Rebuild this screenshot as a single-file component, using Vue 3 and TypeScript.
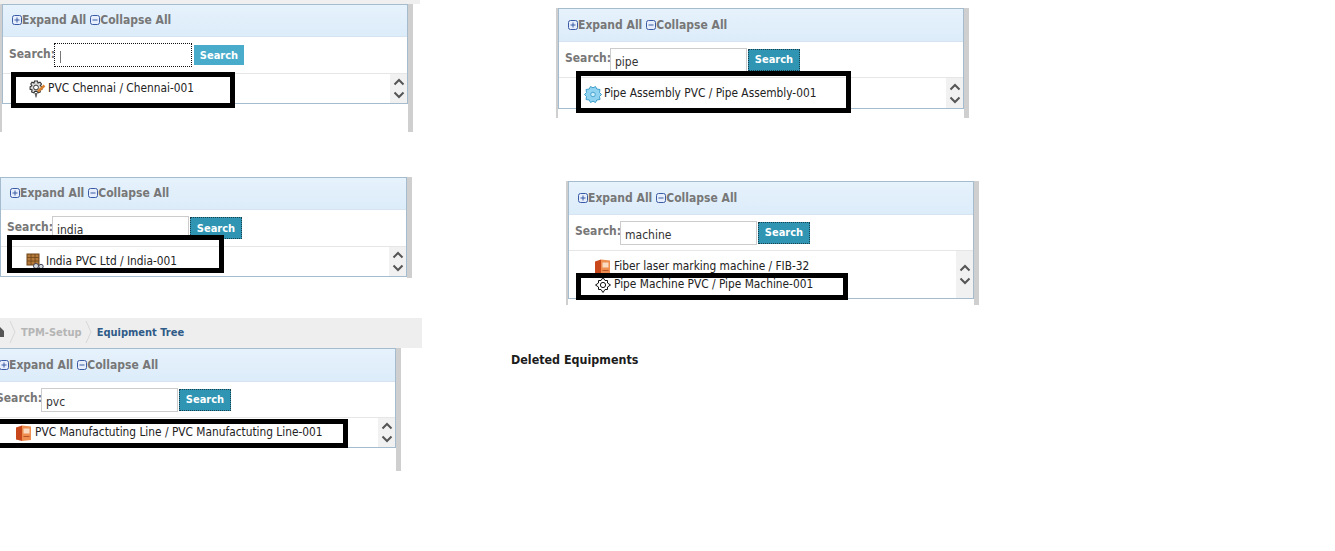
<script setup lang="ts">
type Icon = 'tool' | 'gear' | 'boxes' | 'cabinet' | 'target'
interface Row { icon: Icon; label: string }
interface Panel {
  x: number; y: number; w: number; frameH: number
  headH: number; searchH: number; listH: number; top: number
  query: string; focused: boolean; rows: Row[]
}
const panels: Panel[] = [
  { x: 2, y: 4, w: 406, frameH: 128, headH: 32, searchH: 37, listH: 29, top: 5, query: '', focused: true,
    rows: [{ icon: 'tool', label: 'PVC Chennai / Chennai-001' }] },
  { x: 558, y: 8, w: 406, frameH: 110, headH: 33, searchH: 36, listH: 30, top: 6, query: 'pipe', focused: false,
    rows: [{ icon: 'gear', label: 'Pipe Assembly PVC / Pipe Assembly-001' }] },
  { x: 0, y: 177, w: 407, frameH: 101, headH: 32, searchH: 37, listH: 29, top: 5, query: 'india', focused: false,
    rows: [{ icon: 'boxes', label: 'India PVC Ltd / India-001' }] },
  { x: 568, y: 181, w: 406, frameH: 124, headH: 33, searchH: 36, listH: 47, top: 6, query: 'machine', focused: false,
    rows: [
      { icon: 'cabinet', label: 'Fiber laser marking machine / FIB-32' },
      { icon: 'target', label: 'Pipe Machine PVC / Pipe Machine-001' },
    ] },
  { x: -11, y: 348, w: 407, frameH: 123, headH: 33, searchH: 36, listH: 29, top: 5, query: 'pvc', focused: false,
    rows: [{ icon: 'cabinet', label: 'PVC Manufactuting Line / PVC Manufactuting Line-001' }] },
]
const boxes = [
  { x: 11, y: 72, w: 224, h: 36 },
  { x: 576, y: 71, w: 275, h: 42 },
  { x: 7, y: 235, w: 217, h: 38 },
  { x: 576, y: 273, w: 272, h: 27 },
  { x: -5, y: 419, w: 353, h: 29 },
]
function place(o: { x: number; y: number; w: number; h?: number }, h?: number) {
  return { left: o.x + 'px', top: o.y + 'px', width: o.w + 'px', height: (h ?? o.h) + 'px' }
}
</script>

<template>
  <div class="canvas">
    <div class="topstrip"></div>

    <nav class="crumbs">
      <svg class="home" width="6" height="12" viewBox="0 0 6 12"><path d="M-4 6 L0 1 L4 5 V11 H-4 Z" fill="#555" /></svg>
      <svg class="sep" width="8" height="24" viewBox="0 0 8 24"><path d="M1 1 L6 12 L1 23" fill="none" stroke="#d8d8d8" /></svg>
      <span class="crumb-muted">TPM-Setup</span>
      <svg class="sep" width="8" height="24" viewBox="0 0 8 24"><path d="M1 1 L6 12 L1 23" fill="none" stroke="#d8d8d8" /></svg>
      <span class="crumb-active">Equipment Tree</span>
    </nav>

    <section v-for="p in panels" :key="p.x" class="frame" :style="place(p, p.frameH)">
      <div class="panel">
        <header class="head" :style="{ height: p.headH + 'px' }">
          <a class="tool">
            <svg width="10" height="10" viewBox="0 0 10 10"><rect x=".5" y=".5" width="9" height="9" rx="2" fill="#e6eefb" stroke="#3b5aa5" /><path d="M2.500 5h5M5 2.500v5" stroke="#3b5aa5" /></svg>Expand All
          </a>
          <a class="tool">
            <svg width="10" height="10" viewBox="0 0 10 10"><rect x=".5" y=".5" width="9" height="9" rx="2" fill="#e6eefb" stroke="#3b5aa5" /><path d="M2.500 5h5" stroke="#3b5aa5" /></svg>Collapse All
          </a>
        </header>
        <div class="search" :style="{ height: p.searchH + 'px' }">
          <label class="search-label">Search:</label>
          <div class="field" :class="{ focused: p.focused }">
            <i v-if="p.focused" class="caret"></i>{{ p.query }}
          </div>
          <button class="go" :class="{ light: p.focused }">Search</button>
        </div>
        <div class="list" :style="{ height: p.listH + 'px' }">
          <ul class="rows" :style="{ paddingTop: p.top + 'px' }">
            <li v-for="r in p.rows" :key="r.label" class="row">
              <svg class="ico" width="18" height="18" viewBox="0 0 18 18">
                <template v-if="r.icon === 'tool'">
                  <path d="M6.500 1h3l.5 2 2-.8 1.500 1.800-1.200 1.700 1.700 1v2.600l-2 .6.300 2-2.200 1-1.200-1.500h-2l-1 1.500-2.300-1 .5-2-2-.6V6.700l1.800-1-1.100-1.700L4 2.200l2 .8z" fill="#d9d9d9" stroke="#333" stroke-width="1.100" />
                  <circle cx="8" cy="7.500" r="2.400" fill="#fff" stroke="#333" />
                  <path d="M6.500 13h3l-1 4.500h-1z" fill="#666" />
                  <path d="M10 11.500 L16.500 5.500" stroke="#d9822b" stroke-width="2.400" />
                </template>
                <template v-else-if="r.icon === 'gear'">
                  <path d="M6.500 1.500 L9 2.800 L11.500 1.500 L12.800 4 L16 4.500 L15.500 7.500 L17.500 9.500 L15.500 11.500 L16 14.500 L12.800 15 L11.500 17.500 L9 16.200 L6.500 17.500 L5.200 15 L2 14.500 L2.500 11.500 L.5 9.500 L2.500 7.500 L2 4.500 L5.200 4 Z" fill="#8fd3f0" stroke="#3f9fcb" />
                  <circle cx="9" cy="9.500" r="2.300" fill="#c9ecfa" stroke="#4aa5cf" />
                </template>
                <template v-else-if="r.icon === 'boxes'">
                  <rect x="1" y="1" width="12" height="11" fill="#b5793a" stroke="#6d4519" />
                  <path d="M1 4.500h12M1 8h12M5 1v11M9 1v11" stroke="#6d4519" stroke-width=".8" />
                  <circle cx="10" cy="13" r="2.500" fill="#d6dde0" stroke="#445" />
                  <circle cx="15" cy="13.500" r="2.200" fill="#d6dde0" stroke="#445" />
                </template>
                <template v-else-if="r.icon === 'cabinet'">
                  <path d="M1 3.500 L7 1.500 V17 L1 15.500 Z" fill="#c8481c" />
                  <path d="M7 1.500 L16 2.500 V16 L7 17 Z" fill="#ee8e4f" />
                  <path d="M8.500 4.500h6v5h-6z" fill="#f9dcc2" />
                  <path d="M8.500 12.500h6" stroke="#b9552a" />
                </template>
                <template v-else>
                  <path d="M9 1.500 L11 4.500 H13.500 V7 L16.500 9 L13.500 11 V13.500 H11 L9 16.500 L7 13.500 H4.500 V11 L1.500 9 L4.500 7 V4.500 H7 Z" fill="#fff" stroke="#111" />
                  <circle cx="9" cy="9" r="2.600" fill="#fff" stroke="#111" />
                </template>
              </svg>
              <span class="row-text">{{ r.label }}</span>
            </li>
          </ul>
          <div class="scroll">
            <svg width="12" height="8" viewBox="0 0 12 8"><path d="M1.500 6.500 L6 2 L10.500 6.500" fill="none" stroke="#555" stroke-width="2" /></svg>
            <svg width="12" height="8" viewBox="0 0 12 8"><path d="M1.500 1.500 L6 6 L10.500 1.500" fill="none" stroke="#555" stroke-width="2" /></svg>
          </div>
        </div>
      </div>
    </section>

    <div v-for="b in boxes" :key="b.y" class="mark" :style="place(b)"></div>

    <h2 class="deleted">Deleted Equipments</h2>
  </div>
</template>

<style scoped>
.canvas {
  position: relative;
  width: 1335px;
  height: 551px;
  overflow: hidden;
  background: #fff;
  font-family: "DejaVu Sans", "Liberation Sans", sans-serif;
  font-stretch: condensed;
}
.topstrip {
  position: absolute;
  left: 0;
  top: 0;
  width: 420px;
  height: 4px;
  background: #efefef;
}
.crumbs {
  position: absolute;
  left: 0;
  top: 318px;
  width: 422px;
  height: 30px;
  padding-bottom: 2px;
  box-sizing: border-box;
  background: #eeeeee;
  display: flex;
  align-items: center;
  font-size: 11px;
  font-weight: 700;
}
.home { margin-right: 3px; }
.sep { margin-right: 4px; }
.crumb-muted { color: #b5b5b5; margin-right: 3px; }
.crumb-active { color: #2f5b88; }
.frame {
  position: absolute;
  box-sizing: content-box;
  background: #fff;
}
.frame::before, .frame::after {
  content: "";
  position: absolute;
  top: 0;
  bottom: 0;
  background: #cfcfcf;
}
.frame::before { left: -2px; width: 2px; }
.frame::after { right: -5px; width: 5px; }
.panel {
  box-sizing: border-box;
  border: 1px solid #a4bccd;
  background: #fff;
}
.head {
  box-sizing: border-box;
  display: flex;
  align-items: center;
  gap: 4px;
  padding-left: 9px;
  padding-bottom: 1px;
  background: linear-gradient(#e6f2fc, #dcecf9);
  border-bottom: 1px solid #d5e4f0;
  font-size: 12px;
  font-weight: 700;
  color: #777;
}
.tool { display: flex; align-items: center; gap: 0; }
.search {
  box-sizing: border-box;
  display: flex;
  align-items: center;
  padding-left: 6px;
  border-bottom: 1px solid #e6e6e6;
}
.search-label {
  width: 45px;
  font-size: 12px;
  font-weight: 700;
  color: #777;
  margin-top: -3px;
}
.field {
  position: relative;
  box-sizing: border-box;
  width: 137px;
  height: 24px;
  padding: 5px 0 0 4px;
  border: 1px solid #ccc;
  background: #fff;
  font-size: 12px;
  line-height: 16px;
  color: #333;
}
.field.focused { border: 1px dotted #111; width: 138px; }
.caret {
  position: absolute;
  left: 5px;
  top: 7px;
  width: 1px;
  height: 12px;
  background: #777;
}
.go {
  margin-left: 1px;
  width: 52px;
  height: 22px;
  padding: 0;
  border: 1px dotted #173f4d;
  background: #2f95b3;
  color: #fff;
  font: inherit;
  font-size: 11px;
  font-weight: 700;
}
.go.light { border: 0; background: #4aaccb; width: 50px; height: 20px; margin-left: 2px; }
.list {
  box-sizing: border-box;
  display: flex;
  justify-content: space-between;
}
.rows {
  list-style: none;
  margin: 0;
  padding: 0 0 0 25px;
}
.row {
  display: flex;
  align-items: center;
  gap: 2px;
  height: 18px;
  font-size: 11.8px;
  color: #222;
  white-space: nowrap;
}
.ico { flex: none; margin-top: 2px; }
.row-text { margin-top: -1px; }
.scroll {
  flex: none;
  width: 17px;
  background: #f1f1f1;
  display: flex;
  flex-direction: column;
  align-items: center;
  justify-content: center;
  gap: 5px;
}
.mark {
  position: absolute;
  box-sizing: border-box;
  border: 5px solid #000;
}
.deleted {
  position: absolute;
  left: 511px;
  top: 352px;
  margin: 0;
  font-size: 12.4px;
  line-height: 16px;
  font-weight: 700;
  color: #1c1c1c;
}
</style>
